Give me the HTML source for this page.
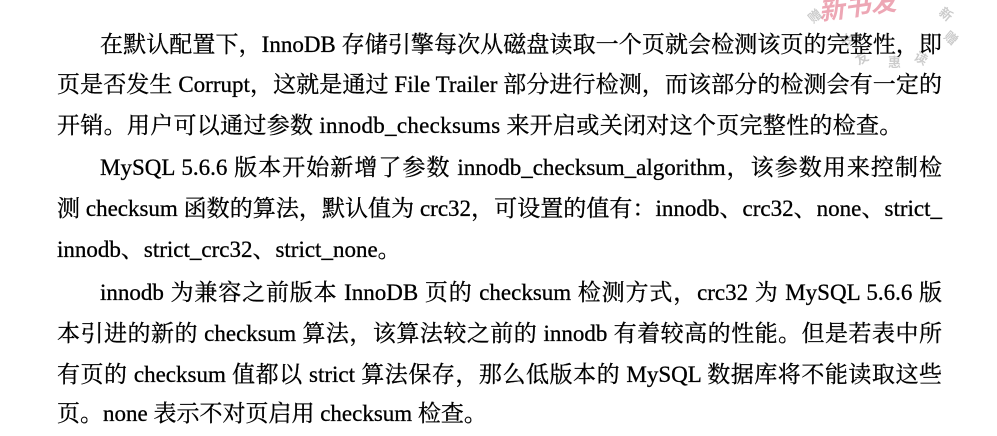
<!DOCTYPE html>
<html><head><meta charset="utf-8"><style>
html,body{margin:0;padding:0;background:#fff;}
body{width:997px;height:436px;position:relative;overflow:hidden;font-family:"Liberation Serif","Noto Serif CJK SC",serif;color:#000;font-size:23px;}
.l{position:absolute;height:30px;line-height:30px;white-space:nowrap;-webkit-text-stroke:0.3px #000;}
.j{text-align:justify;text-align-last:justify;}
.wm{position:absolute;color:#e0607a;opacity:.55;font-weight:bold;font-family:"Noto Sans CJK SC",sans-serif;}
.wg{position:absolute;color:#999;opacity:.5;font-weight:bold;font-size:13px;font-family:"Noto Sans CJK SC",sans-serif;}
</style></head><body>
<div class="wm" style="left:818px;top:-14px;font-size:26px;transform:rotate(-8deg);font-style:italic;">新书发</div>
<div class="wg" style="left:808px;top:6px;transform:rotate(-40deg)">赠</div>
<div class="wg" style="left:940px;top:4px;transform:rotate(40deg)">新</div>
<div class="wg" style="left:945px;top:28px;transform:rotate(40deg)">赠</div>
<div class="wg" style="left:840px;top:30px;transform:rotate(-40deg)">长</div>
<div class="wg" style="left:855px;top:48px;transform:rotate(-30deg)">友</div>
<div class="wg" style="left:888px;top:52px;">惠</div>
<div class="wg" style="left:915px;top:48px;transform:rotate(30deg)">读</div>

<div class="l j" style="left:100px;width:842px;top:30px">在默认配置下，InnoDB 存储引擎每次从磁盘读取一个页就会检测该页的完整性，即</div>
<div class="l j" style="left:57px;width:885px;top:70px">页是否发生 Corrupt，这就是通过 File Trailer 部分进行检测，而该部分的检测会有一定的</div>
<div class="l" style="left:57px;top:111px;letter-spacing:0.3px">开销。用户可以通过参数 innodb_checksums 来开启或关闭对这个页完整性的检查。</div>
<div class="l j" style="left:100px;width:842px;top:153px">MySQL 5.6.6 版本开始新增了参数 innodb_checksum_algorithm，该参数用来控制检</div>
<div class="l j" style="left:57px;width:885px;top:194px">测 checksum 函数的算法，默认值为 crc32，可设置的值有：innodb、crc32、none、strict_</div>
<div class="l" style="left:57px;top:235px">innodb、strict_crc32、strict_none。</div>
<div class="l j" style="left:100px;width:842px;top:278px">innodb 为兼容之前版本 InnoDB 页的 checksum 检测方式，crc32 为 MySQL 5.6.6 版</div>
<div class="l j" style="left:57px;width:885px;top:319px">本引进的新的 checksum 算法，该算法较之前的 innodb 有着较高的性能。但是若表中所</div>
<div class="l j" style="left:57px;width:885px;top:360px">有页的 checksum 值都以 strict 算法保存，那么低版本的 MySQL 数据库将不能读取这些</div>
<div class="l" style="left:57px;top:399px">页。none 表示不对页启用 checksum 检查。</div>
</body></html>
